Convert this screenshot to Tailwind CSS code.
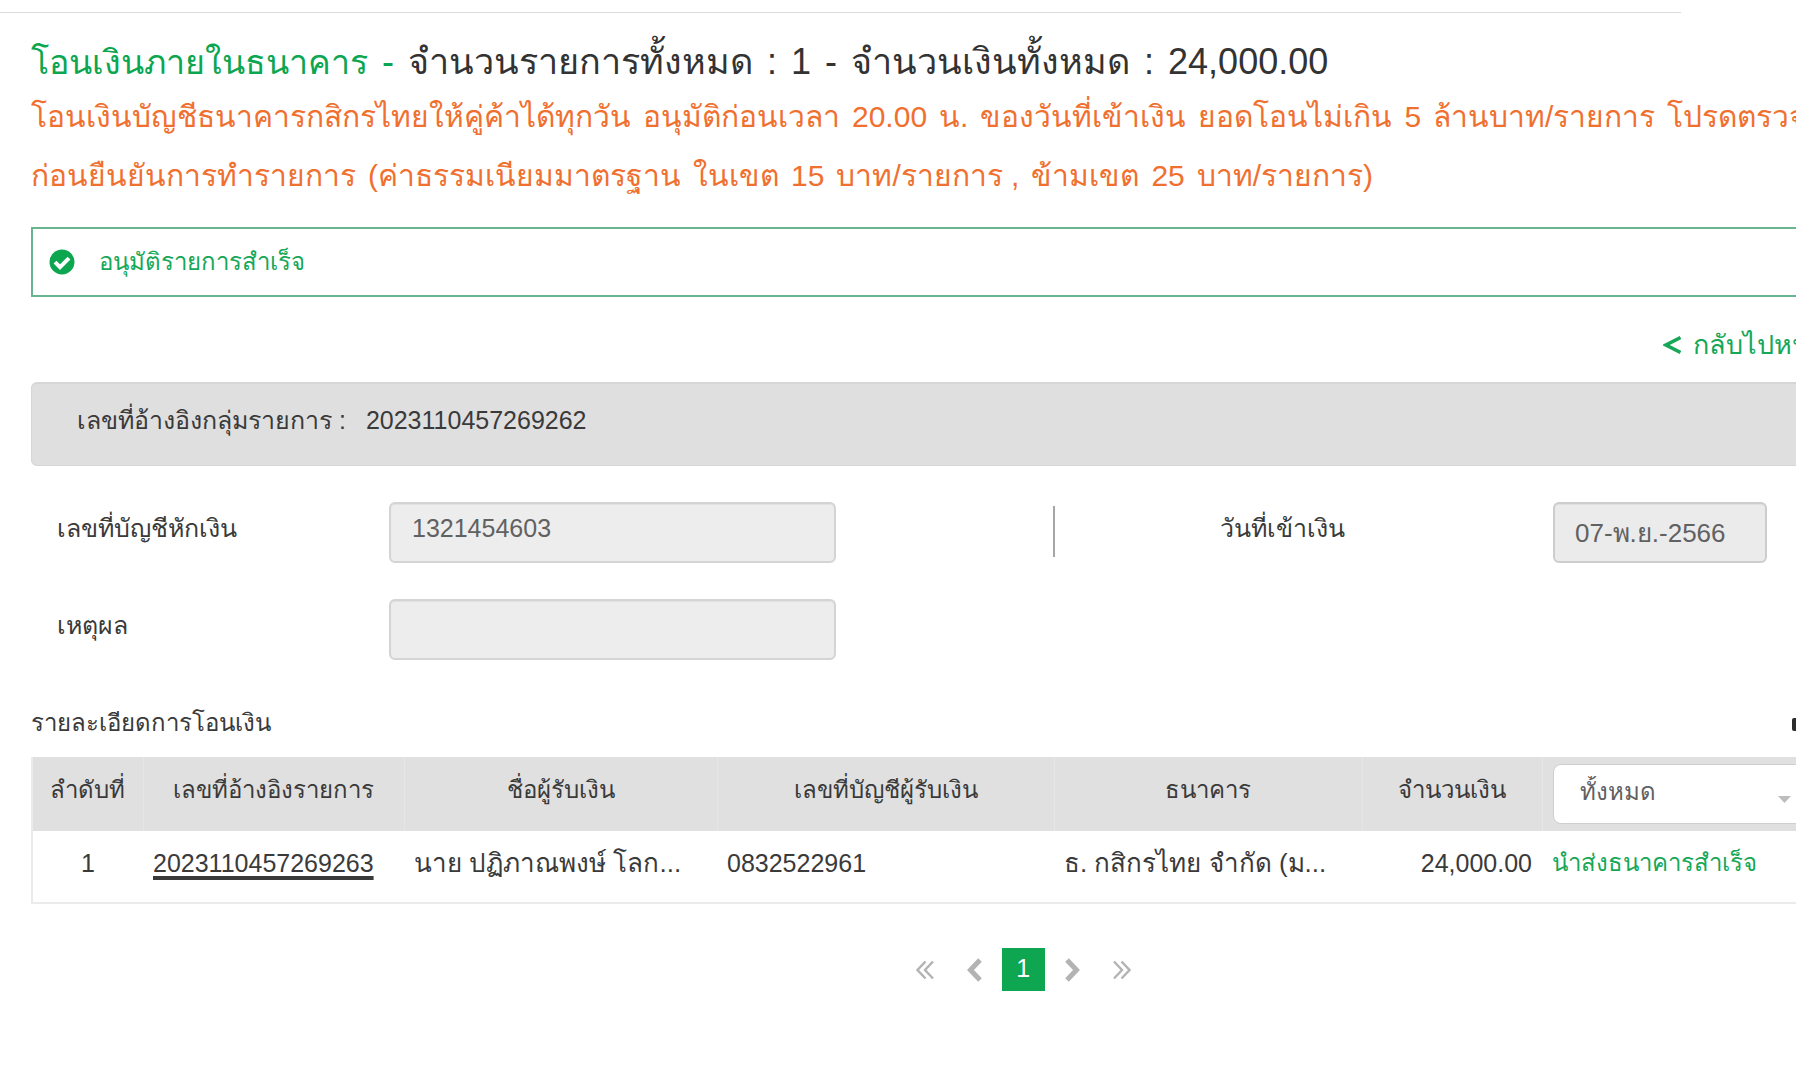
<!DOCTYPE html>
<html lang="th">
<head>
  <meta charset="UTF-8">
  <meta name="viewport" content="width=device-width, initial-scale=1.0">
  <title>โอนเงินภายในธนาคาร</title>
  <script src="https://cdn.jsdelivr.net/npm/@tailwindcss/browser@4"></script>
</head>
<body class="overflow-x-hidden bg-white font-['Liberation_Sans',sans-serif] text-[25px] leading-9 text-[#3a3a3a]">
  <div class="mt-3 mr-[115px] border-t border-[#dcdcdc]"></div>

  <!-- content is wider than the window and runs off to the right -->
  <div class="overflow-hidden">
    <main class="ml-[31px] w-[110.5%]">
      <h1 class="flex gap-[14px] pt-6 text-4xl leading-[50px] text-[#333]">
        <span class="text-[34px] leading-[50px] text-[#0ba64f]">โอนเงินภายในธนาคาร</span>
        <span class="text-[#0ba64f]">-</span>
        <span>จำนวนรายการทั้งหมด</span>
        <span>:</span>
        <span>1</span>
        <span>-</span>
        <span>จำนวนเงินทั้งหมด</span>
        <span>:</span>
        <span>24,000.00</span>
      </h1>
      <div class="text-[30px] leading-[59px] whitespace-nowrap text-[#f0702f]">
        <p class="flex gap-3">
          <span>โอนเงินบัญชีธนาคารกสิกรไทยให้คู่ค้าได้ทุกวัน</span>
          <span>อนุมัติก่อนเวลา</span>
          <span>20.00</span>
          <span>น.</span>
          <span>ของวันที่เข้าเงิน</span>
          <span>ยอดโอนไม่เกิน</span>
          <span>5</span>
          <span>ล้านบาท/รายการ</span>
          <span>โปรดตรวจสอบ</span>
        </p>
        <p class="flex gap-3">
          <span>ก่อนยืนยันการทำรายการ</span>
          <span>(ค่าธรรมเนียมมาตรฐาน</span>
          <span>ในเขต</span>
          <span>15</span>
          <span>บาท/รายการ ,</span>
          <span>ข้ามเขต</span>
          <span>25</span>
          <span>บาท/รายการ)</span>
        </p>
      </div>

      <div class="mt-[22px] flex h-[70px] items-center gap-6 border-2 border-[#69b58f] px-4 text-2xl text-[#16a757]">
        <svg class="size-[26px]" viewBox="0 0 26 26"><circle cx="13" cy="13" r="12.5" fill="#0ba64f"/><path d="M6 13.2l5 5 9-9" fill="none" stroke="#fff" stroke-width="4"/></svg>
        <p>อนุมัติรายการสำเร็จ</p>
      </div>

      <div class="mt-[30px] ml-auto w-[353px]">
        <a href="#" class="flex items-center gap-3 text-[27px] leading-9 whitespace-nowrap text-[#16a757]">
          <svg class="h-5 w-[18px]" viewBox="0 0 18 20"><path d="M17.500 2.500L3 10l14.500 7.500" fill="none" stroke="currentColor" stroke-width="3.500"/></svg>
          กลับไปหน้าหลัก
        </a>
      </div>

      <div class="mt-[19px] flex h-[84px] gap-5 rounded-md border border-t-2 border-[#d6d6d6] bg-[#dfdfdf] px-[45px] pt-[18px]">
        <span>เลขที่อ้างอิงกลุ่มรายการ :</span>
        <span>2023110457269262</span>
      </div>

      <form class="mt-9 grid grid-cols-[332px_666px_498px_214px] gap-y-9 pl-[26px]">
        <label for="account" class="pt-2">เลขที่บัญชีหักเงิน</label>
        <div class="flex">
          <input id="account" type="text" readonly value="1321454603" class="h-[61px] w-[447px] rounded-md border-2 border-[#d4d4d4] bg-[#ededed] px-[21px] pb-2 text-[#616161] inset-shadow-xs">
          <div class="mt-1 ml-auto h-[51px] border-l-2 border-[#a6a6a6]"></div>
        </div>
        <label for="date" class="pt-2 pl-[165px]">วันที่เข้าเงิน</label>
        <input id="date" type="text" readonly value="07-พ.ย.-2566" class="h-[61px] w-[214px] rounded-md border-2 border-[#cdcdcd] bg-[#ebebeb] px-5 text-[26px] text-[#616161] inset-shadow-xs">
        <label for="reason" class="pt-2">เหตุผล</label>
        <input id="reason" type="text" readonly class="h-[61px] w-[447px] rounded-md border-2 border-[#d4d4d4] bg-[#ededed] px-[21px] text-[#616161] inset-shadow-xs">
      </form>

      <div class="mt-[45px] flex justify-between">
        <h2 class="text-2xl leading-9">รายละเอียดการโอนเงิน</h2>
        <button type="button" aria-label="พิมพ์" class="flex w-56 items-center">
          <svg class="h-7 w-8" viewBox="0 0 32 28" fill="#2d2d2d"><path d="M7 1h18v7H7z"/><rect y="9" width="32" height="13" rx="2"/><path d="M7 18h18v9H7z"/></svg>
        </button>
      </div>

      <table class="mt-4 w-full table-fixed border-2 border-t-0 border-[#ebebeb]">
        <thead>
          <tr class="h-[74px] bg-[#e0e0e0] text-2xl">
            <th class="w-[111px] border-r border-[#e6e6e6] pb-2 font-normal">ลำดับที่</th>
            <th class="w-[261px] border-r border-[#e6e6e6] pb-2 font-normal">เลขที่อ้างอิงรายการ</th>
            <th class="w-[313px] border-r border-[#e6e6e6] pb-2 font-normal">ชื่อผู้รับเงิน</th>
            <th class="w-[337px] border-r border-[#e6e6e6] pb-2 font-normal">เลขที่บัญชีผู้รับเงิน</th>
            <th class="w-[308px] border-r border-[#e6e6e6] pb-2 font-normal">ธนาคาร</th>
            <th class="w-[180px] border-r border-[#e6e6e6] pb-2 font-normal">จำนวนเงิน</th>
            <th class="px-[10px] font-normal">
              <div class="relative w-[264px]">
                <select aria-label="สถานะ" class="h-[60px] w-full appearance-none rounded-lg border border-[#cfcfcf] bg-white px-[26px] pb-1 text-2xl text-[#616161]">
                  <option>ทั้งหมด</option>
                </select>
                <svg class="pointer-events-none absolute top-8 right-[26px] h-[7px] w-[13px]" viewBox="0 0 13 7"><path d="M0 0h13L6.500 7z" fill="#bdbdbd"/></svg>
              </div>
            </th>
          </tr>
        </thead>
        <tbody>
          <tr class="h-[72px]">
            <td class="pb-2 text-center">1</td>
            <td class="px-[10px] pb-2"><a href="#" class="underline decoration-4 underline-offset-4">2023110457269263</a></td>
            <td class="px-[10px] pb-2 text-[26px]">นาย ปฏิภาณพงษ์ โลก...</td>
            <td class="px-[10px] pb-2">0832522961</td>
            <td class="px-[10px] pb-2 text-[26px]">ธ. กสิกรไทย จำกัด (ม...</td>
            <td class="px-[10px] pb-2 text-right">24,000.00</td>
            <td class="px-[10px] pb-2 text-2xl text-[#16a757]">นำส่งธนาคารสำเร็จ</td>
          </tr>
        </tbody>
      </table>

      <nav class="mt-11 flex items-center justify-center text-[#b3b3b3]">
        <a href="#" aria-label="หน้าแรก" class="mr-[33px]"><svg class="h-5 w-[18px]" viewBox="0 0 18 20"><path d="M9.500 1.500L1.500 10l8 8.500M17 1.500L9 10l8 8.500" fill="none" stroke="currentColor" stroke-width="2.400"/></svg></a>
        <a href="#" aria-label="ก่อนหน้า" class="mr-5"><svg class="h-6 w-[15px]" viewBox="0 0 15 24"><path d="M13 2L3.500 12l9.500 10" fill="none" stroke="currentColor" stroke-width="5"/></svg></a>
        <a href="#" class="flex size-[43px] justify-center bg-[#0fa651] pt-[2px] text-white">1</a>
        <a href="#" aria-label="ถัดไป" class="ml-5"><svg class="h-6 w-[15px]" viewBox="0 0 15 24"><path d="M2 2l9.500 10L2 22" fill="none" stroke="currentColor" stroke-width="5"/></svg></a>
        <a href="#" aria-label="หน้าสุดท้าย" class="ml-[33px]"><svg class="h-5 w-[18px]" viewBox="0 0 18 20"><path d="M1 1.500L9 10l-8 8.500M8.500 1.500l8 8.500-8 8.500" fill="none" stroke="currentColor" stroke-width="2.400"/></svg></a>
      </nav>
    </main>
  </div>
</body>
</html>
